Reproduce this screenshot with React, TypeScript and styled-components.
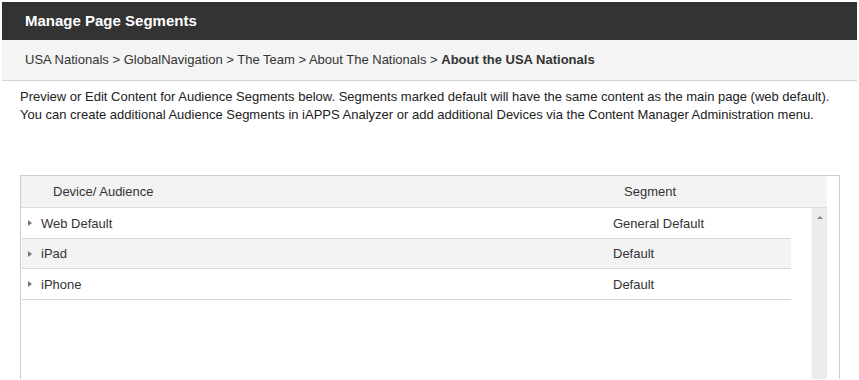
import React from 'react';
import styled, { createGlobalStyle } from 'styled-components';

const GlobalStyle = createGlobalStyle`
  html, body {
    margin: 0;
    padding: 0;
    background: #ffffff;
  }
  body {
    font-family: "Liberation Sans", Arial, sans-serif;
    color: #222222;
    overflow: hidden;
  }
`;

const Page = styled.div`
  padding: 2px 2px 0 2px;
  width: 855px;
`;

const TitleBar = styled.div`
  height: 38px;
  line-height: 38px;
  background-color: #333333;
  color: #ffffff;
  font-size: 15px;
  font-weight: bold;
  padding-left: 23px;
`;

const Breadcrumb = styled.div`
  height: 40px;
  line-height: 39px;
  background-color: #f4f4f4;
  border-bottom: 1px solid #d4d4d4;
  padding-left: 23px;
  font-size: 13px;
  color: #333333;
`;

const Current = styled.span`
  font-weight: bold;
`;

const Intro = styled.p`
  margin: 0;
  padding: 7px 0 0 18px;
  font-size: 13px;
  line-height: 18px;
  color: #222222;
`;

const Grid = styled.div`
  margin: 51px 0 0 18px;
  width: 818px;
  height: 203px;
  border: 1px solid #cccccc;
  border-bottom: none;
`;

const HeaderRow = styled.div`
  display: flex;
  width: 806px;
  height: 31px;
  background-color: #f3f3f3;
  border-bottom: 1px solid #dcdcdc;
  font-size: 13px;
  color: #333333;
  align-items: center;
`;

const HeaderCell = styled.div<{ $width: number; $indent: number }>`
  width: ${(p) => p.$width}px;
  padding-left: ${(p) => p.$indent}px;
  box-sizing: border-box;
`;

const Body = styled.div`
  display: flex;
  width: 806px;
`;

const Rows = styled.div`
  width: 769px;
  padding-left: 1px;
`;

const Row = styled.div<{ $alt?: boolean }>`
  display: flex;
  align-items: center;
  height: 30.5px;
  box-sizing: border-box;
  padding-top: 1px;
  border-bottom: 1px solid #d6d6d6;
  background-color: ${(p) => (p.$alt ? '#f3f3f3' : '#ffffff')};
  font-size: 13px;
  color: #333333;
`;

const Expander = styled.span`
  width: 0;
  height: 0;
  margin: 0 9px 0 6px;
  border-top: 3px solid transparent;
  border-bottom: 3px solid transparent;
  border-left: 4px solid #777777;
`;

const NameCell = styled.div`
  width: 572px;
`;

const SegmentCell = styled.div`
  flex: 1;
`;

const Scrollbar = styled.div`
  margin-left: 20px;
  width: 16px;
  height: 180px;
  background-color: #ececec;
  border-left: 1px solid #f6f6f6;
  box-sizing: border-box;
  display: flex;
  justify-content: center;
  padding-top: 8px;
`;

const ArrowUp = styled.span`
  width: 0;
  height: 0;
  border-left: 3px solid transparent;
  border-right: 3px solid transparent;
  border-bottom: 3px solid #888888;
`;

const segments = [
  { name: 'Web Default', segment: 'General Default' },
  { name: 'iPad', segment: 'Default' },
  { name: 'iPhone', segment: 'Default' },
];

const App = () => {
  return (
    <Page>
      <GlobalStyle />
      <TitleBar>Manage Page Segments</TitleBar>
      <Breadcrumb>
        USA Nationals &gt; GlobalNavigation &gt; The Team &gt; About The Nationals &gt;{' '}
        <Current>About the USA Nationals</Current>
      </Breadcrumb>
      <Intro>
        Preview or Edit Content for Audience Segments below. Segments marked default will have the same content as the main page (web default).
        <br />
        You can create additional Audience Segments in iAPPS Analyzer or add additional Devices via the Content Manager Administration menu.
      </Intro>
      <Grid>
        <HeaderRow>
          <HeaderCell $width={589} $indent={32}>Device/ Audience</HeaderCell>
          <HeaderCell $width={217} $indent={14}>Segment</HeaderCell>
        </HeaderRow>
        <Body>
          <Rows>
            {segments.map((s, i) => (
              <Row key={s.name} $alt={i === 1}>
                <Expander />
                <NameCell>{s.name}</NameCell>
                <SegmentCell>{s.segment}</SegmentCell>
              </Row>
            ))}
          </Rows>
          <Scrollbar>
            <ArrowUp />
          </Scrollbar>
        </Body>
      </Grid>
    </Page>
  );
};

export default App;
